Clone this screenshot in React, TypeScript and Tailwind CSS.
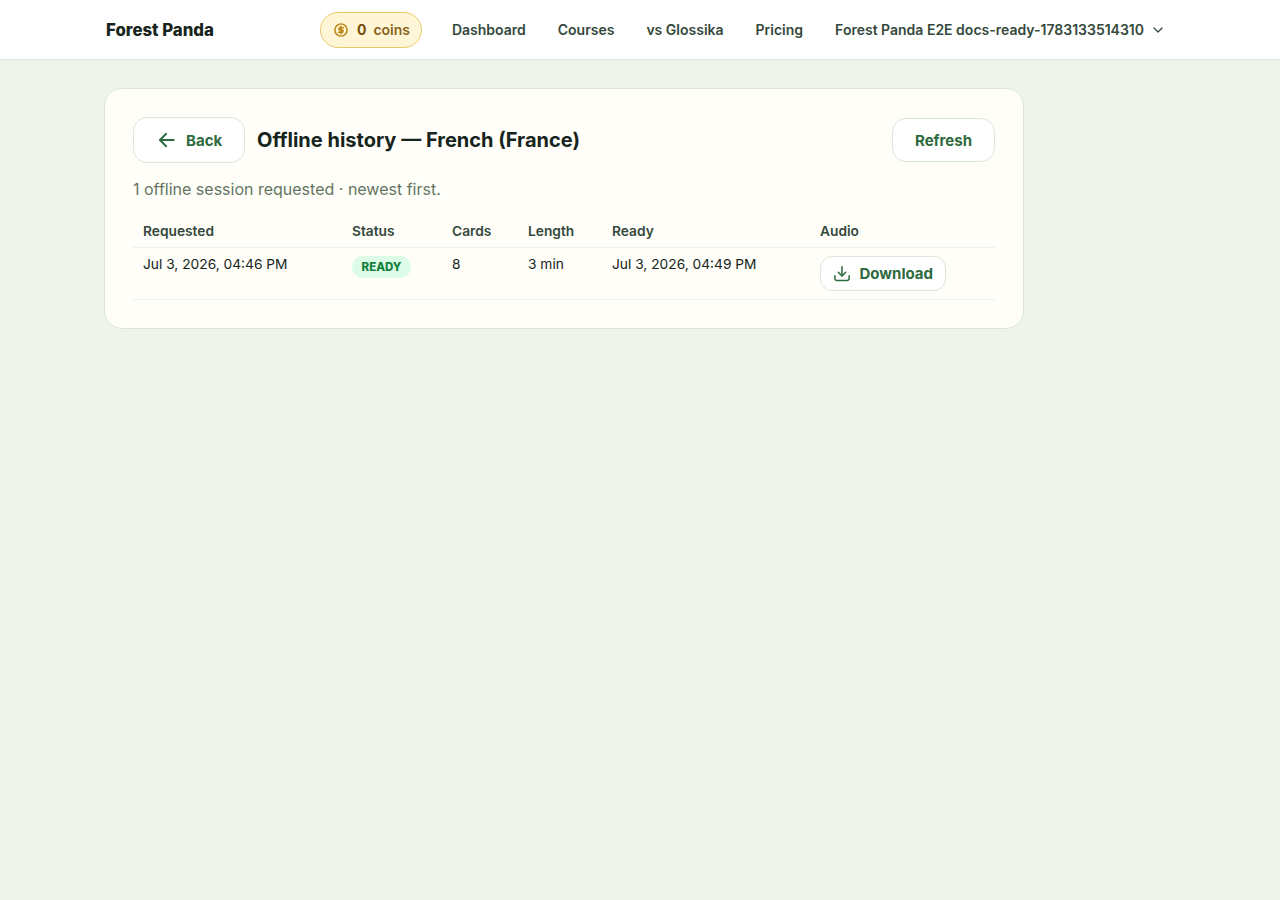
import React from 'react'

interface Session {
    requested: string
    status: string
    cards: number
    length: string
    ready: string
}

const navItems = ['Dashboard', 'Courses', 'vs Glossika', 'Pricing']

const sessions: Session[] = [
    {
        requested: 'Jul 3, 2026, 04:46 PM',
        status: 'Ready',
        cards: 8,
        length: '3 min',
        ready: 'Jul 3, 2026, 04:49 PM',
    },
]

const columns = [
    { label: 'Requested', width: 'w-[209px]' },
    { label: 'Status', width: 'w-[100px]' },
    { label: 'Cards', width: 'w-[76px]' },
    { label: 'Length', width: 'w-[84px]' },
    { label: 'Ready', width: 'w-[208px]' },
    { label: 'Audio', width: 'w-[185px]' },
]

const iconProps = {
    viewBox: '0 0 24 24',
    fill: 'none',
    stroke: 'currentColor',
    strokeLinecap: 'round' as const,
    strokeLinejoin: 'round' as const,
}

const CoinIcon = () => (
    <svg {...iconProps} strokeWidth={2.2} className="w-4 h-4 text-[#b9800f]">
        <circle cx="12" cy="12" r="9.2" />
        <path d="M15.500 8.500h-5a1.750 1.750 0 0 0 0 3.500h3a1.750 1.750 0 0 1 0 3.500h-5" />
        <path d="M12 6.500v11" />
    </svg>
)

const ArrowLeftIcon = () => (
    <svg {...iconProps} strokeWidth={2.2} className="w-5 h-5">
        <path d="M20 12H4" />
        <path d="M11 4.500 3.500 12l7.500 7.500" />
    </svg>
)

const DownloadIcon = () => (
    <svg {...iconProps} strokeWidth={2} className="w-[18px] h-[18px]">
        <path d="M12 3.500v12" />
        <path d="m7 11 5 5 5-5" />
        <path d="M2.500 15.500V19a3 3 0 0 0 3 3h13a3 3 0 0 0 3-3v-3.500" />
    </svg>
)

const ChevronDownIcon = () => (
    <svg {...iconProps} strokeWidth={2} className="w-4 h-4">
        <path d="m6 9 6 6 6-6" />
    </svg>
)

const Header: React.FC = () => (
    <header className="h-[60px] bg-white border-b border-[#dbe7d7]">
        <div className="h-[59px] flex items-center justify-between pl-[106px] pr-[114px]">
            <a href="#" className="pt-0.5 text-[16.8px] font-extrabold text-[#16241c]">Forest Panda</a>
            <nav className="flex items-center text-sm font-semibold text-[#34483c]">
                <span className="mr-[30px] flex h-9 w-[102px] items-center rounded-full border border-[#e8ca68] bg-[#fff6d8] pl-3 text-[#8a6417]">
                    <CoinIcon />
                    <span className="ml-2 font-bold text-[#7a4f08]">0</span>
                    <span className="ml-[7px]">coins</span>
                </span>
                <div className="flex gap-8">
                    {navItems.map((item) => (
                        <a key={item} href="#">{item}</a>
                    ))}
                    <button className="flex items-center gap-1.5">
                        Forest Panda E2E docs-ready-1783133514310
                        <ChevronDownIcon />
                    </button>
                </div>
            </nav>
        </div>
    </header>
)

export default function App() {
    return (
        <div className="min-h-screen bg-[#eef4e9] font-['Inter',sans-serif] text-[#16241c]">
            <Header />
            <main className="ml-[104px] mt-7 w-[920px] rounded-[18px] border border-[#dbe7d7] bg-[#fffef9] p-7">
                <div className="flex h-[46px] items-center">
                    <button className="flex h-[46px] w-28 items-center gap-[9px] rounded-[14px] border border-[#dbe7d7] bg-white pl-[23px] text-[15px] font-bold text-[#2d6a3e]">
                        <ArrowLeftIcon />
                        <span className="pt-0.5">Back</span>
                    </button>
                    <h1 className="ml-3 text-xl font-bold">Offline history — French (France)</h1>
                    <button className="ml-auto h-11 w-[103px] rounded-[14px] border border-[#dbe7d7] bg-white pt-0.5 text-[15px] font-bold text-[#2d6a3e]">
                        Refresh
                    </button>
                </div>
                <p className="mt-3.5 text-base leading-6 text-[#647562]">
                    {sessions.length} offline session requested · newest first.
                </p>
                <table className="mt-3 w-full table-fixed text-left text-[13.76px] leading-5">
                    <thead>
                        <tr className="h-[34px] border-b border-[#f0eff2] text-[#34483c]">
                            {columns.map((column) => (
                                <th key={column.label} className={`${column.width} px-2.5 pt-0.5 font-semibold`}>{column.label}</th>
                            ))}
                        </tr>
                    </thead>
                    <tbody>
                        {sessions.map((session) => (
                            <tr key={session.requested} className="h-[52px] border-b border-[#f0eff2] align-top">
                                <td className="px-2.5 pt-1.5 whitespace-nowrap">{session.requested}</td>
                                <td className="px-2.5 pt-2">
                                    <span className="flex h-[22px] w-[59px] items-center justify-center rounded-full bg-[#dcfce7] text-[11.5px] font-extrabold uppercase text-[#15803d]">
                                        {session.status}
                                    </span>
                                </td>
                                <td className="px-2.5 pt-1.5">{session.cards}</td>
                                <td className="px-2.5 pt-1.5">{session.length}</td>
                                <td className="px-2.5 pt-1.5 whitespace-nowrap">{session.ready}</td>
                                <td className="px-2.5 pt-2">
                                    <button className="flex h-[35px] w-[126px] items-center gap-2 rounded-xl border border-[#dbe7d7] bg-white pl-3 text-[15px] font-bold text-[#2d6a3e]">
                                        <DownloadIcon />
                                        <span className="pt-px pl-[0.5px]">Download</span>
                                    </button>
                                </td>
                            </tr>
                        ))}
                    </tbody>
                </table>
            </main>
        </div>
    )
}
